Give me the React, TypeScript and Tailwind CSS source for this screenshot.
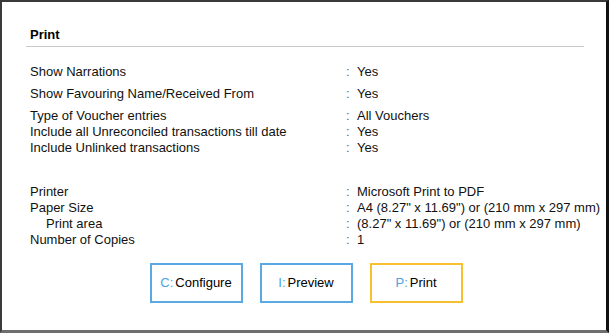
import React from "react";

const font = { fontFamily: '"Liberation Sans", Arial, sans-serif' };

function Row({ label, value, indent, className }: { label: string; value: string; indent?: boolean; className?: string }) {
  return (
    <div className={"flex h-[16px] items-center leading-[16px] " + (className ?? "")}>
      <div className={"w-[316px] shrink-0 " + (indent ? "pl-[16px]" : "")}>{label}</div>
      <div className="w-[11px] shrink-0 text-[#666]">:</div>
      <div>{value}</div>
    </div>
  );
}

function Btn({ k, label, active }: { k: string; label: string; active?: boolean }) {
  return (
    <div
      className={
        "flex h-[40px] w-[93px] items-center justify-center border-2 bg-white text-[13px] " +
        (active ? "border-[#f7c02f]" : "border-[#5aa8e4]")
      }
    >
      <span className="text-[#4ea3e0]">{k}:</span>
      <span className="ml-[2px] text-black">{label}</span>
    </div>
  );
}

export default function App() {
  return (
    <div
      style={font}
      className="box-border h-[333px] w-[609px] border-t-2 border-l-2 border-r-[3px] border-b-[3px] border-t-[#3a3a3a] border-l-[#3a3a3a] border-r-[#111] border-b-[#6e6e6e] bg-white text-[13px] text-[#111]"
    >
      <div className="ml-[24px] mr-[22px] pt-[25px]">
        <div className="h-[16px] pl-[4px] text-[13px] font-bold leading-[16px] text-black">Print</div>
        <div className="mt-[3px] h-px bg-[#c8c8c8]" />
      </div>
      <div className="pl-[28px] pt-[17px]">
        <Row label="Show Narrations" value="Yes" />
        <Row label="Show Favouring Name/Received From" value="Yes" className="mt-[6px]" />
        <Row label="Type of Voucher entries" value="All Vouchers" className="mt-[6px]" />
        <Row label="Include all Unreconciled transactions till date" value="Yes" />
        <Row label="Include Unlinked transactions" value="Yes" />
        <Row label="Printer" value="Microsoft Print to PDF" className="mt-[28px]" />
        <Row label="Paper Size" value={'A4 (8.27" x 11.69") or (210 mm x 297 mm)'} />
        <Row label="Print area" value={'(8.27" x 11.69") or (210 mm x 297 mm)'} indent />
        <Row label="Number of Copies" value="1" />
      </div>
      <div className="mt-[15px] flex justify-center gap-[17px] pl-[4px]">
        <Btn k="C" label="Configure" />
        <Btn k="I" label="Preview" />
        <Btn k="P" label="Print" active />
      </div>
    </div>
  );
}
